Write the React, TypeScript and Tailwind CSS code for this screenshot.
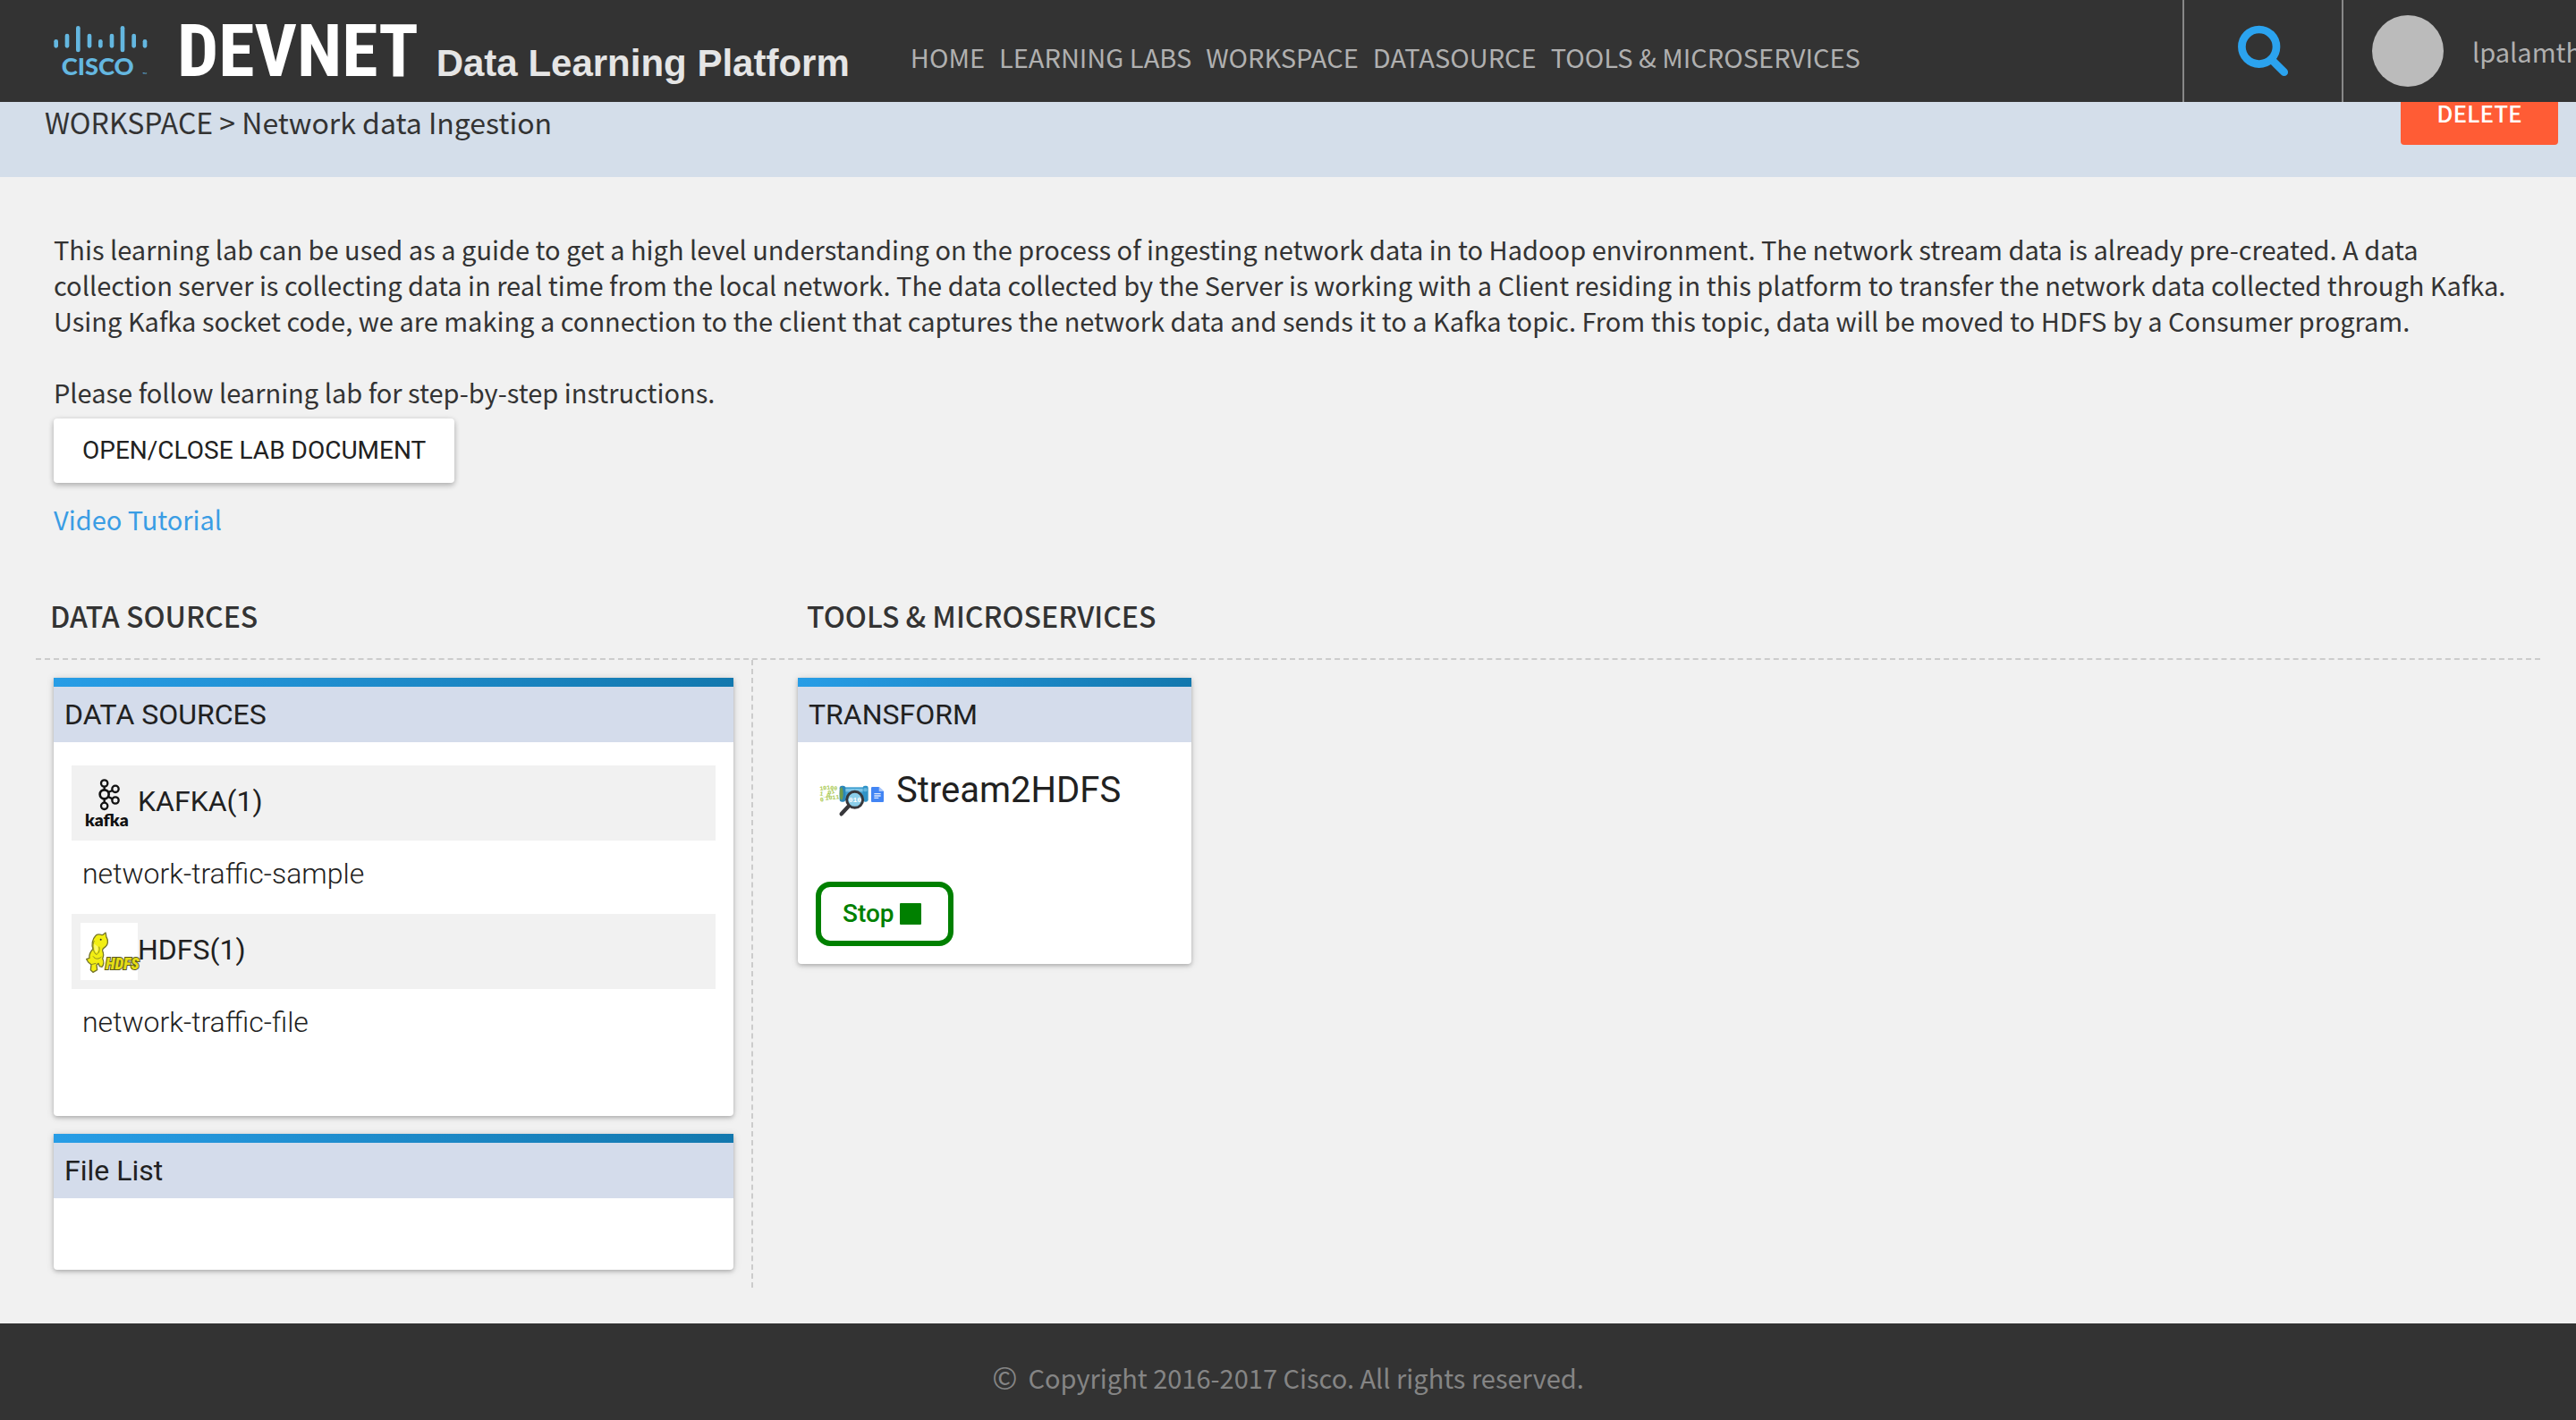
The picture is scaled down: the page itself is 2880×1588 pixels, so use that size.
import type { ReactNode } from "react";

const navItems = ["HOME", "LEARNING LABS", "WORKSPACE", "DATASOURCE", "TOOLS & MICROSERVICES"];

const ciscoBars = [
  [68, 102, 131],
  [105, 83, 131],
  [142, 57, 145],
  [180, 83, 131],
  [217, 102, 131],
  [255, 83, 131],
  [291, 57, 145],
  [329, 83, 131],
  [366, 102, 131],
];

function CiscoLogo() {
  return (
    <svg viewBox="60 57 318 168" className="h-14 w-[106px] shrink-0 overflow-visible" role="img" aria-label="Cisco">
      {ciscoBars.map(([x, top, bottom]) => (
        <rect key={x} x={x - 7} y={top} width="14" height={bottom - top} rx="7" fill="#64b7e0" />
      ))}
      <text x="86" y="222" fontSize="82" className="font-['Lato'] font-black" fill="#64b7e0">
        CISCO
      </text>
      <text x="358" y="228" fontSize="20" className="font-['Lato']" fill="#64b7e0">
        ™
      </text>
    </svg>
  );
}

function SearchIcon() {
  return (
    <svg viewBox="0 0 60 60" className="size-[60px]" fill="none" stroke="#2ba3ef" strokeWidth="8.7" strokeLinecap="round">
      <circle cx="25.7" cy="25.3" r="19.3" />
      <path d="M40 40 53.7 53.7" />
    </svg>
  );
}

function KafkaIcon() {
  return (
    <svg viewBox="0 0 192 192" className="size-16 shrink-0 overflow-visible" aria-hidden="true">
      <g fill="none" stroke="#111" strokeWidth="7">
        <path d="M80 41V52M80 82V95M93 60 107 54M93 75 107 82" />
        <circle cx="80" cy="30" r="11" />
        <circle cx="80" cy="67" r="15" strokeWidth="8" />
        <circle cx="80" cy="106" r="11" />
        <circle cx="117" cy="49" r="11" />
        <circle cx="117" cy="87" r="11" />
      </g>
      <text x="15" y="174" fontSize="58" className="font-['Lato'] font-extrabold" fill="#111">
        kafka
      </text>
    </svg>
  );
}

function HdfsIcon() {
  return (
    <svg viewBox="0 0 192 192" className="size-16 shrink-0 overflow-visible bg-white" aria-hidden="true">
      <path
        d="M50 44C54 38 64 38 72 41C77 40 80 35 84 33C87 38 84 44 88 50C94 60 92 74 84 80C78 84 72 88 74 94C78 104 78 112 74 120C80 130 78 142 72 148L64 146L60 136L54 142L56 158L42 166L34 158L36 140L26 132L20 122L30 118C28 106 34 96 42 88C36 74 40 54 50 44Z"
        fill="#f2ee12"
        stroke="#77772a"
        strokeWidth="4"
        strokeLinejoin="round"
      />
      <path d="M46 60C38 76 42 96 52 106C62 104 66 90 62 80M42 112C50 124 62 122 70 114M36 140L52 136" fill="none" stroke="#8d8c24" strokeWidth="3" />
      <path d="M46 70C44 84 48 96 53 100C58 96 60 88 58 80Z" fill="#fbf86a" />
      <circle cx="68" cy="56" r="3" fill="#333" />
      <text
        x="84"
        y="156"
        fontSize="53"
        className="font-['Roboto_Condensed'] font-black italic"
        fill="#e4dd16"
        stroke="#5b591f"
        strokeWidth="6"
        paintOrder="stroke"
      >
        HDFS
      </text>
    </svg>
  );
}

function StreamIcon() {
  return (
    <svg viewBox="0 0 216 120" className="mt-4 h-10 w-[72px] shrink-0" aria-hidden="true">
      <g fill="#a9c94f" fontSize="20" className="font-['Liberation_Mono'] font-bold">
        <text x="2" y="24" transform="rotate(-8 2 24)">101</text>
        <text x="36" y="21" transform="rotate(6 36 21)">00</text>
        <text x="0" y="40" transform="rotate(12 0 40)">1_0</text>
        <text x="30" y="38" transform="rotate(-14 30 38)">01</text>
        <text x="4" y="62" transform="rotate(-10 4 62)">0</text>
        <text x="20" y="56" transform="rotate(-5 20 56)">1011</text>
      </g>
      <rect x="76" y="13" width="80" height="43" fill="#3f9fd0" />
      <rect x="76" y="18" width="80" height="10" fill="#7cc4e6" />
      <rect x="68" y="8" width="20" height="54" rx="8" fill="#2a86b8" />
      <ellipse cx="74" cy="35" rx="6" ry="22" fill="#6f9a4c" />
      <rect x="146" y="8" width="18" height="54" rx="7" fill="#2f92c6" />
      <rect x="148" y="16" width="13" height="12" rx="4" fill="#63b5de" />
      <path d="M97 78 74 103" stroke="#37373b" strokeWidth="13" strokeLinecap="round" />
      <circle cx="119" cy="55" r="27" fill="#8ccfea" stroke="#37373b" strokeWidth="9" />
      <text x="98" y="64" fontSize="24" className="font-['Liberation_Mono'] font-bold" fill="#fff">
        010
      </text>
      <path d="M178 12H200L216 27V60Q216 63 213 63H177Q174 63 174 60V16Q174 12 178 12Z" fill="#4285f4" />
      <path d="M200 12 216 27H200Z" fill="#a8c6fa" />
      <path d="M184 35H206M184 42H206M184 49H199" stroke="#dce8fd" strokeWidth="4" />
    </svg>
  );
}

function Card({ title, className, children }: { title: string; className?: string; children: ReactNode }) {
  return (
    <section
      className={`overflow-hidden rounded-b bg-white shadow-[0_2px_4px_rgba(0,0,0,0.2),0_1px_10px_rgba(0,0,0,0.14)] ${className ?? ""}`}
    >
      <div className="h-2.5 bg-linear-to-r from-[#279de6] to-[#1278ae]" />
      <h3 className="flex h-[62px] items-center bg-[#d4dceb] px-3 text-[32px]">{title}</h3>
      {children}
    </section>
  );
}

function Source({ icon, name, file }: { icon: ReactNode; name: string; file: string }) {
  return (
    <li>
      <div className="flex h-[84px] items-center bg-[#f1f1f1] px-2.5">
        {icon}
        <span className="pb-1 text-[32px]">{name}</span>
      </div>
      <div className="flex h-[82px] items-center px-3 pb-2 text-[32px] font-light">{file}</div>
    </li>
  );
}

export default function App() {
  return (
    <div className="flex min-h-screen flex-col overflow-x-hidden bg-[#f1f1f1] font-['Noto_Sans_CJK_SC',sans-serif] text-[29px] leading-10 text-[#333]">
      <header className="sticky top-0 z-10 flex h-[114px] items-center bg-[#333] pl-[60px] whitespace-nowrap text-[#b0b0b0]">
        <a href="#home" className="flex items-center gap-8">
          <CiscoLogo />
          <span className="flex items-baseline gap-5">
            <span className="font-['Roboto_Condensed',sans-serif] text-[82px] leading-none font-bold text-white">DEVNET</span>
            <span className="font-['Liberation_Sans',sans-serif] text-[42px] leading-none font-bold text-[#e5e5e5]">
              Data Learning Platform
            </span>
          </span>
        </a>
        <nav className="ml-[68px] flex gap-4 pt-3">
          {navItems.map((item) => (
            <a key={item} href="#nav">
              {item}
            </a>
          ))}
        </nav>
        <button
          type="button"
          aria-label="Search"
          className="ml-auto flex h-full w-[180px] shrink-0 items-center justify-center border-x-2 border-[#888]"
        >
          <SearchIcon />
        </button>
        <div className="flex w-[260px] shrink-0 items-center gap-8 overflow-hidden pl-8">
          <span className="size-20 shrink-0 rounded-full bg-[#bbb]" />
          <span>lpalamth</span>
        </div>
      </header>

      <div className="-mt-6 flex h-[108px] items-start justify-between bg-[#d4deea] pr-5 pl-[50px]">
        <h1 className="pt-[26px] text-[32px]">WORKSPACE &gt; Network data Ingestion</h1>
        <button type="button" className="h-[72px] w-44 rounded bg-[#ff5c35] text-[26px] font-medium text-white">
          DELETE
        </button>
      </div>

      <main className="grow px-10 pt-[60px] pb-10">
        <div className="px-5">
          <p>
            This learning lab can be used as a guide to get a high level understanding on the process of ingesting
            network data in to Hadoop environment. The network stream data is already pre-created. A data collection
            server is collecting data in real time from the local network. The data collected by the Server is working
            with a Client residing in this platform to transfer the network data collected through Kafka. Using Kafka
            socket code, we are making a connection to the client that captures the network data and sends it to a
            Kafka topic. From this topic, data will be moved to HDFS by a Consumer program.
          </p>
          <p className="mt-10">Please follow learning lab for step-by-step instructions.</p>
          <button
            type="button"
            className="mt-2.5 block h-[72px] rounded bg-white px-8 font-['Roboto',sans-serif] text-[28px] text-[#212121] shadow-[0_3px_6px_rgba(0,0,0,0.2),0_1px_6px_rgba(0,0,0,0.12)]"
          >
            OPEN/CLOSE LAB DOCUMENT
          </button>
          <a href="#video" className="mt-5 block w-fit text-[#3a9de4]">
            Video Tutorial
          </a>
        </div>

        <div className="mt-[68px] grid grid-cols-[802px_1fr] border-b-2 border-dashed border-[#ccc] pb-7 text-[32px] font-medium">
          <h2 className="pl-4">DATA SOURCES</h2>
          <h2 className="pl-[60px]">TOOLS &amp; MICROSERVICES</h2>
        </div>

        <div className="grid grid-cols-[802px_1fr] font-['Roboto',sans-serif] text-[#212121]">
          <div className="flex flex-col gap-5 border-r-2 border-dashed border-[#ccc] p-5">
            <Card title="DATA SOURCES">
              <ul className="px-5 pt-[26px] pb-[60px]">
                <Source icon={<KafkaIcon />} name="KAFKA(1)" file="network-traffic-sample" />
                <Source icon={<HdfsIcon />} name="HDFS(1)" file="network-traffic-file" />
              </ul>
            </Card>
            <Card title="File List">
              <div className="h-20" />
            </Card>
          </div>
          <div className="py-5 pl-[50px]">
            <Card title="TRANSFORM" className="w-[440px]">
              <div className="px-5 pt-[30px] pb-5">
                <div className="flex items-start gap-3.5 pl-1">
                  <StreamIcon />
                  <span className="text-[40px] leading-12">Stream2HDFS</span>
                </div>
                <button
                  type="button"
                  className="mt-[70px] flex h-[72px] items-center gap-1.5 rounded-2xl border-6 border-[#008000] pr-[30px] pl-6 text-[28px] font-medium text-[#008000]"
                >
                  Stop
                  <span className="size-6 rounded-[1px] bg-[#008000]" />
                </button>
              </div>
            </Card>
          </div>
        </div>
      </main>

      <footer className="flex items-center justify-center gap-3 bg-[#333] pt-10 pb-7 text-[#858585]">
        <span className="text-[34px]">©</span>
        <span>Copyright 2016-2017 Cisco. All rights reserved.</span>
      </footer>
    </div>
  );
}
